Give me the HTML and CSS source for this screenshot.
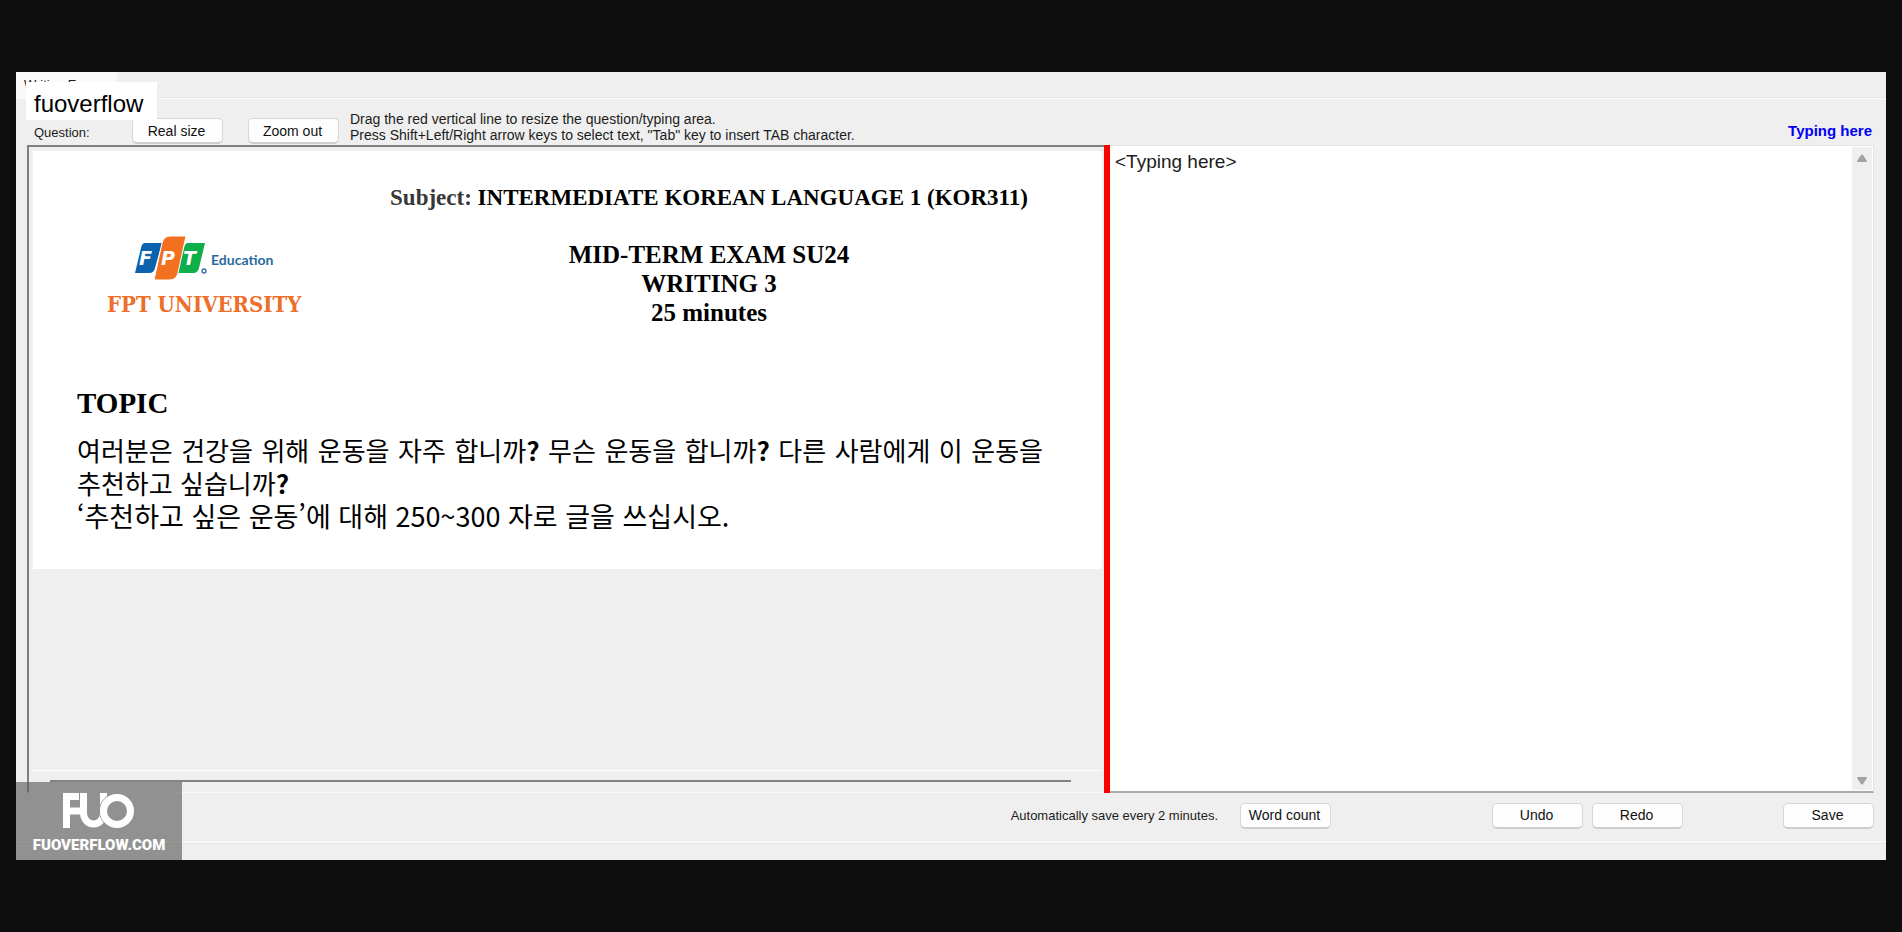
FILE: index.html
```html
<!DOCTYPE html>
<html lang="en">
<head>
<meta charset="utf-8">
<title>Writing Exam</title>
<link rel="stylesheet" href="styles.css">
</head>
<body>
<main class="window">
  <header class="tabs"><div class="tab">Writing Exam</div></header>
  <div class="brand-label">fuoverflow</div>

  <div class="toolbar">
    <span class="question-label">Question:</span>
    <div class="zoom-buttons">
      <button class="btn" type="button">Real size</button>
      <button class="btn" type="button">Zoom out</button>
    </div>
    <p class="hint">Drag the red vertical line to resize the question/typing area.<br>Press Shift+Left/Right arrow keys to select text, "Tab" key to insert TAB character.</p>
    <label class="typing-label" for="answer">Typing here</label>
  </div>

  <div class="workspace">
    <section class="question">
      <article class="paper">
        <div class="paper-head">
          <div class="logo">
            <svg class="logo-mark" viewBox="0 0 150 48" width="150" height="48" role="img" aria-label="FPT Education">
              <path d="M11 8h17l-7 25q-1 5-6 5H1l6-25q1-5 4-5z" fill="#0b63b0"/>
              <path d="M54 8h17l-6 25q-1 5-6 5H43l7-25q1-5 4-5z" fill="#0eae4b"/>
              <path d="M36 1h16l-8 37q-2 7-8 7H20l8-37q2-7 8-7z" fill="#f37021" stroke="#fff" stroke-width="1"/>
              <g class="logo-letters"><text x="5" y="30">F</text><text x="27" y="30">P</text><text x="49" y="30">T</text></g>
              <circle cx="70" cy="36" r="2" fill="none" stroke="#3f6fae" stroke-width="1.4"/>
              <text class="logo-sub" x="77" y="30">Education</text>
            </svg>
            <div class="logo-name">FPT UNIVERSITY</div>
          </div>
          <div class="titles">
            <p class="subject"><span>Subject:</span> INTERMEDIATE KOREAN LANGUAGE 1 (KOR311)</p>
            <h1 class="exam">MID-TERM EXAM SU24<br>WRITING 3<br>25 minutes</h1>
          </div>
        </div>
        <h2 class="topic">TOPIC</h2>
        <div class="korean" lang="ko">
          <p class="prompt">여러분은 건강을 위해 운동을 자주 합니까<b>?</b> 무슨 운동을 합니까<b>?</b> 다른 사람에게 이 운동을 추천하고 싶습니까<b>?</b></p>
          <p class="task">‘추천하고 싶은 운동’에 대해 250~300 자로 글을 쓰십시오.</p>
        </div>
      </article>
      <div class="hscroll"><div class="hscroll-line"></div></div>
    </section>
    <div class="splitter"></div>
    <section class="answer">
      <textarea id="answer" class="answer-text" spellcheck="false">&lt;Typing here&gt;</textarea>
      <div class="vscroll">
        <svg viewBox="0 0 12 9" width="12" height="9"><path d="M5 1q1-1 2 0l4 6q0 1-1 1H2q-1 0-1-1z" fill="#a3a3a3"/></svg>
        <svg viewBox="0 0 12 9" width="12" height="9"><path d="M5 8q1 1 2 0l4-6q0-1-1-1H2q-1 0-1 1z" fill="#a3a3a3"/></svg>
      </div>
    </section>
  </div>

  <footer class="actions">
    <span class="autosave">Automatically save every 2 minutes.</span>
    <button class="btn" type="button">Word count</button>
    <div class="history">
      <button class="btn" type="button">Undo</button>
      <button class="btn" type="button">Redo</button>
    </div>
    <button class="btn save" type="button">Save</button>
  </footer>
  <div class="status"></div>

  <div class="watermark">
    <svg viewBox="0 0 72 36" width="72" height="36" role="img" aria-label="FUO">
      <g fill="none" stroke="#fff" stroke-width="7">
        <path d="M3.500 35V3.500H16M3.500 18H18"/>
        <path d="M20.500 0V20a10 11 0 0 0 20 0V0"/>
        <circle cx="54" cy="18" r="17.500" stroke="#929292" stroke-width="1"/>
        <circle cx="54" cy="18" r="13.500"/>
      </g>
    </svg>
    <div class="watermark-text">FUOVERFLOW.COM</div>
  </div>
</main>
</body>
</html>
```
FILE: styles.css
```css
* { box-sizing: border-box; }

body {
  margin: 0;
  min-height: 100vh;
  padding: 72px 16px;
  display: flex;
  background: #0e0e0e;
  color: #1c1c1c;
  font: 14px/16px "Liberation Sans", Arial, sans-serif;
}

p, h1, h2 { margin: 0; }

.window {
  position: relative;
  flex: 1;
  min-width: 0;
  display: flex;
  flex-direction: column;
  background: #efefef;
}

.tabs {
  height: 27px;
  border-bottom: 1px solid #fafafa;
  box-shadow: inset 0 -1px #e6e6e6;
}
.tab {
  width: 101px;
  height: 27px;
  padding: 5px 8px;
  background: #f9f9f9;
  font-size: 13px;
  white-space: nowrap;
}

.brand-label {
  position: absolute;
  left: 10px;
  top: 10px;
  width: 131px;
  padding: 7px 8px 1px;
  background: #fff;
  color: #000;
  font-size: 24px;
  line-height: 30px;
}

.toolbar {
  display: flex;
  align-items: flex-end;
  height: 46px;
  padding: 0 14px 1px 18px;
}
.question-label { width: 98px; padding-bottom: 3px; font-size: 13px; }
.zoom-buttons { display: flex; gap: 25px; margin-right: 11px; }
.hint { flex: 1; white-space: nowrap; padding-bottom: 1px; }
.typing-label {
  padding-bottom: 5px;
  color: #0000f5;
  font-size: 15px;
  font-weight: bold;
}

.btn {
  width: 91px;
  height: 26px;
  padding: 0 2px 0 0;
  border: 1px solid #d6d6d6;
  border-bottom: 2px solid #cdcdcd;
  border-radius: 5px;
  background: #fdfdfd;
  color: #111;
  font: inherit;
}

.workspace {
  flex: 1;
  display: grid;
  grid-template-columns: 1077fr 6px 764fr;
  margin: 0 12px 0 11px;
}

.question {
  display: flex;
  flex-direction: column;
  min-width: 0;
  padding: 4px 2px 0 4px;
  border-top: 2px solid #7f7f7f;
  border-left: 2px solid #7f7f7f;
  border-bottom: 1px solid #fafafa;
}
.paper {
  padding: 33px 59px 37px 44px;
  background: #fff;
  color: #000;
}
.paper-head { display: flex; }
.logo { width: 230px; padding: 51px 0 0 30px; }
.logo-mark { display: block; margin-left: 27px; }
.logo-letters { fill: #fff; font: italic bold 19px "DejaVu Sans", sans-serif; }
.logo-sub { fill: #2a6a9e; font: bold 14px Lato, sans-serif; }
.logo-name {
  padding-top: 9px;
  color: #ec6f2a;
  font: bold 22px/24px "DejaVu Serif Condensed", "DejaVu Serif", serif;
  white-space: nowrap;
}
.titles {
  flex: 1;
  padding-left: 68px;
  text-align: center;
  font-family: "Liberation Serif", serif;
  font-weight: bold;
}
.subject { font-size: 23px; line-height: 28px; }
.subject span { color: #383838; }
.exam { margin-top: 28px; font-size: 25px; line-height: 29px; }
.topic {
  margin-top: 59px;
  font: bold 29px/34px "Liberation Serif", serif;
}
.korean {
  margin-top: 13px;
  font: 27px/33px "Noto Sans CJK KR", sans-serif;
}
.prompt { font-size: 26px; text-align: justify; word-break: keep-all; }

.hscroll {
  height: 22px;
  margin-top: auto;
  padding: 9px 31px 0 17px;
  border-top: 1px solid #fff;
}
.hscroll-line { height: 2px; background: #838383; }

.splitter { background: #f00; }

.answer {
  display: flex;
  border-top: 1px solid #e6e6e6;
  border-right: 1px solid #e4e4e4;
  border-bottom: 2px solid #ababab;
  background: #fff;
}
.answer-text {
  flex: 1;
  min-width: 0;
  padding: 5px;
  border: 0;
  outline: 0;
  resize: none;
  background: #fff;
  color: #1c1c1c;
  font: 19px/22px "Liberation Sans", Arial, sans-serif;
}
.vscroll {
  width: 20px;
  margin: 1px;
  padding: 7px 4px 5px;
  display: flex;
  flex-direction: column;
  justify-content: space-between;
  background: #efefef;
}

.actions {
  display: flex;
  align-items: center;
  height: 48px;
  padding: 0 12px 3px 0;
}
.autosave { margin-left: auto; margin-right: 22px; font-size: 13px; }
.history { display: flex; gap: 9px; margin-left: 161px; }
.save { margin-left: 100px; }
.status {
  height: 19px;
  border-top: 2px solid #f8f8f8;
  box-shadow: inset 0 1px #e6e6e6;
}

.watermark {
  position: absolute;
  left: 0;
  bottom: 0;
  width: 166px;
  height: 78px;
  padding-top: 11px;
  display: flex;
  flex-direction: column;
  align-items: center;
  background: rgba(96, 96, 96, .66);
  color: #fff;
}
.watermark-text {
  margin-top: 6px;
  font: 900 15px/20px Roboto, "Liberation Sans", sans-serif;
}
```
